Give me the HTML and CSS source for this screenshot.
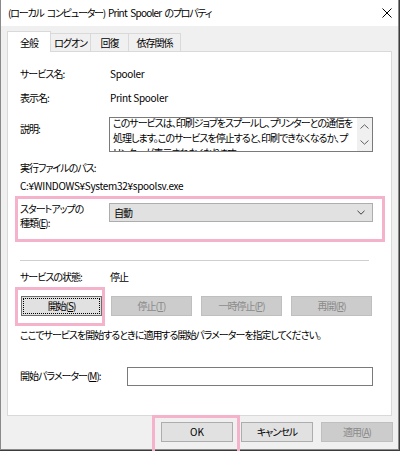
FILE: index.html
```html
<!DOCTYPE html>
<html lang="ja">
<head>
<meta charset="utf-8">
<link rel="stylesheet" href="styles.css">
</head>
<body>
<div class="window">
  <div class="titlebar">
    <span class="title">(ローカル コンピューター) <span class="en-t">Print Spooler</span> のプロパティ</span>
    <svg class="close" width="10" height="10" viewBox="0 0 10 10"><path d="M0.5 0.5L9.5 9.5M9.5 0.5L0.5 9.5" stroke="#000" stroke-width="1" fill="none"/></svg>
  </div>
  <div class="tabs">
    <div class="tab active">全般</div>
    <div class="tab t-logon">ログオン</div>
    <div class="tab t-recover">回復</div>
    <div class="tab t-dep">依存関係</div>
  </div>
  <div class="panel">
    <div class="row"><span class="label">サービス名:</span><span class="value en">Spooler</span></div>
    <div class="row r-gap"><span class="label">表示名:</span><span class="value en">Print Spooler</span></div>
    <div class="row r-desc">
      <span class="label desc-label">説明:</span>
      <div class="desc">
        <div class="desc-text">このサービスは、印刷ジョブをスプールし、プリンターとの通信を<br>処理します。このサービスを停止すると、印刷できなくなるか、プ<br>リンターが表示されなくなります。</div>
        <div class="sb">
          <svg width="9" height="5" viewBox="0 0 9 5"><path d="M0.5 4.5L4.5 0.8L8.5 4.5" stroke="#606060" fill="none"/></svg>
          <svg width="9" height="5" viewBox="0 0 9 5"><path d="M0.5 0.5L4.5 4.2L8.5 0.5" stroke="#606060" fill="none"/></svg>
        </div>
      </div>
    </div>
    <div class="line r-exec">実行ファイルのパス:</div>
    <div class="line r-path en">C:¥WINDOWS¥System32¥spoolsv.exe</div>
    <div class="row r-startup">
      <span class="label startup-label">スタートアップの<br>種類(<u>E</u>):</span>
      <div class="select">
        <span>自動</span>
        <svg class="chev" width="8" height="5" viewBox="0 0 8 5"><path d="M0.5 0.8L4 4.2L7.5 0.8" stroke="#404040" fill="none"/></svg>
      </div>
    </div>
    <div class="sep"></div>
    <div class="row r-status"><span class="label">サービスの状態:</span><span class="value">停止</span></div>
    <div class="btnrow">
      <div class="btn focus">開始(<u>S</u>)</div>
      <div class="btn disabled">停止(<u>T</u>)</div>
      <div class="btn disabled">一時停止(<u>P</u>)</div>
      <div class="btn disabled">再開(<u>R</u>)</div>
    </div>
    <div class="line r-hint">ここでサービスを開始するときに適用する開始パラメーターを指定してください。</div>
    <div class="row r-param">
      <span class="label param-label">開始パラメーター(<u>M</u>):</span>
      <div class="input"></div>
    </div>
  </div>
  <div class="footer">
    <div class="btn fbtn en-b">OK</div>
    <div class="btn fbtn">キャンセル</div>
    <div class="btn fbtn disabled">適用(<u>A</u>)</div>
  </div>
  <div class="hl hl-startup"></div>
  <div class="hl hl-start"></div>
  <div class="hl hl-ok"></div>
</div>
</body>
</html>
```
FILE: styles.css
```css
* { box-sizing: border-box; }
html, body { margin: 0; padding: 0; }
body {
  width: 400px;
  height: 451px;
  overflow: hidden;
  background: #3c3c3c;
  font-family: "Noto Sans CJK JP", "Noto Sans", sans-serif;
  font-size: 10px;
  letter-spacing: -1px;
  font-feature-settings: "palt";
  color: #000;
}
u { text-decoration: underline; text-underline-offset: 1px; }
.en { letter-spacing: -0.3px; }
.en-t { letter-spacing: -0.8px; }
.en-b { letter-spacing: 0; }

.window {
  position: relative;
  width: 399px;
  height: 450px;
  background: #f0f0f0;
  border: 1px solid #8a8a8a;
  border-top: none;
}

.titlebar {
  height: 26px;
  background: #fff;
  display: flex;
  align-items: center;
  padding-left: 7px;
}
.title {
  font-size: 10px;
  line-height: 16px;
  white-space: nowrap;
  letter-spacing: -1.2px;
  word-spacing: 2px;
}
.close { margin-left: auto; margin-right: 6px; }

.tabs {
  position: relative;
  z-index: 1;
  display: flex;
  align-items: flex-end;
  height: 20px;
  margin: 5px 0 0 6px;
}
.tab {
  height: 18px;
  border: 1px solid #d9d9d9;
  border-bottom: none;
  margin-left: -1px;
  background: #f0f0f0;
  display: flex;
  align-items: center;
  justify-content: center;
  line-height: 14px;
  white-space: nowrap;
}
.tab.active {
  height: 21px;
  width: 44px;
  margin-left: 0;
  margin-bottom: -1px;
  background: #fff;
  position: relative;
  z-index: 2;
  padding-top: 1px;
}
.t-logon { width: 41px; }
.t-recover { width: 39px; }
.t-dep { width: 53px; }

.panel {
  margin-left: 6px;
  width: 385px;
  height: 365px;
  background: #fff;
  border: 1px solid #d9d9d9;
  padding: 14px 0 0 12px;
}

.row { display: flex; align-items: flex-start; line-height: 16px; }
.line { line-height: 16px; white-space: nowrap; }
.label { width: 89px; flex: none; white-space: nowrap; }
.value { padding-left: 1px; }
.r-gap { margin-top: 8px; }

.r-desc { margin-top: 11px; }
.desc-label { padding-top: 4px; }
.desc {
  width: 264px;
  height: 35px;
  border: 1px solid #7a7a7a;
  display: flex;
  overflow: hidden;
}
.desc-text {
  flex: 1;
  padding-left: 3px;
  margin-top: -3px;
  line-height: 15px;
  white-space: nowrap;
  overflow: hidden;
}
.sb {
  width: 15px;
  flex: none;
  background: #f0f0f0;
  display: flex;
  flex-direction: column;
  justify-content: space-between;
  align-items: center;
  padding: 6px 0 6px;
}

.r-exec { margin-top: 8px; }
.r-path { margin-top: 2px; }

.r-startup { margin-top: 8px; }
.startup-label { line-height: 14px; }
.select {
  margin-top: 1px;
  width: 264px;
  height: 19px;
  background: #e1e1e1;
  border: 1px solid #adadad;
  display: flex;
  align-items: center;
  padding: 0 7px 0 4px;
  line-height: 14px;
}
.chev { margin-left: auto; }

.sep {
  margin-top: 30px;
  width: 349px;
  height: 1px;
  background: #cfcfcf;
}
.r-status { margin-top: 8px; }

.btnrow {
  margin-top: 11px;
  margin-left: 1px;
  display: flex;
  gap: 9px;
}
.btn {
  width: 81px;
  height: 20px;
  background: #e1e1e1;
  border: 1px solid #adadad;
  display: flex;
  align-items: center;
  justify-content: center;
  line-height: 14px;
  white-space: nowrap;
}
.btn.disabled {
  background: #cccccc;
  border-color: #bfbfbf;
  color: #8a8a8a;
}
.btn.focus {
  border-color: #6d6d6d;
  outline: 1px dotted #000;
  outline-offset: -3px;
}

.r-hint { margin-top: 11px; }

.r-param { margin-top: 24px; }
.param-label { width: 107px; padding-top: 1px; }
.input {
  width: 246px;
  height: 19px;
  border: 1px solid #7a7a7a;
  background: #fff;
}

.footer {
  display: flex;
  justify-content: flex-end;
  gap: 8px;
  padding: 6px 5px 0 0;
}
.fbtn { width: 72px; }

.hl {
  position: absolute;
  border: 3px solid #f4b3cb;
}
.hl-startup { left: 14px; top: 196px; width: 370px; height: 46px; }
.hl-start { left: 14px; top: 287px; width: 90px; height: 39px; }
.hl-ok { left: 151px; top: 415px; width: 88px; height: 40px; }
```
